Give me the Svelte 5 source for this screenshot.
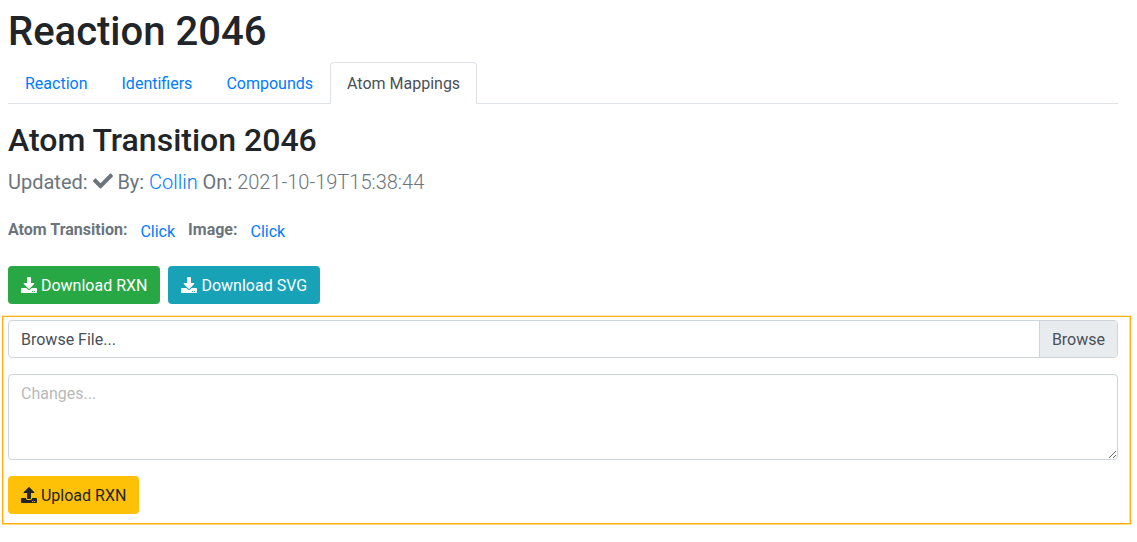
<script>
  const tabs = ['Reaction', 'Identifiers', 'Compounds', 'Atom Mappings'];
  let active = $state('Atom Mappings');
  let changes = $state('');
  const dots =
    'm-124 88c0-11-9-20-20-20s-20 9-20 20 9 20 20 20 20-9 20-20zm64 0c0-11-9-20-20-20s-20 9-20 20 9 20 20 20 20-9 20-20z';
  const icons = {
    check:
      'M173.898 439.404l-166.4-166.4c-9.997-9.997-9.997-26.206 0-36.204l36.203-36.204c9.997-9.998 26.207-9.998 36.204 0L192 312.69 432.095 72.596c9.997-9.997 26.207-9.997 36.204 0l36.203 36.204c9.997 9.997 9.997 26.206 0 36.204l-294.4 294.401c-9.998 9.997-26.207 9.997-36.204-.001z',
    download:
      'M216 0h80c13.3 0 24 10.7 24 24v168h87.7c17.8 0 26.7 21.5 14.1 34.1L269.7 378.3c-7.5 7.5-19.8 7.5-27.3 0L90.1 226.1c-12.6-12.6-3.7-34.1 14.1-34.1H192V24c0-13.3 10.7-24 24-24zm296 376v112c0 13.3-10.7 24-24 24H24c-13.3 0-24-10.7-24-24V376c0-13.3 10.7-24 24-24h146.7l49 49c20.1 20.1 52.5 20.1 72.6 0l49-49H488c13.3 0 24 10.7 24 24z' + dots,
    upload:
      'M296 384h-80c-13.3 0-24-10.7-24-24V192h-87.7c-17.8 0-26.7-21.5-14.1-34.1L242.3 5.7c7.5-7.5 19.8-7.5 27.3 0l152.2 152.2c12.6 12.6 3.7 34.1-14.1 34.1H320v168c0 13.3-10.7 24-24 24zm216-8v112c0 13.3-10.7 24-24 24H24c-13.3 0-24-10.7-24-24V376c0-13.3 10.7-24 24-24h136v8c0 30.9 25.1 56 56 56h80c30.9 0 56-25.1 56-56v-8h136c13.3 0 24 10.7 24 24z' + dots
  };
</script>

{#snippet icon(name)}
  <svg class="icon" viewBox="0 0 512 512" aria-hidden="true"><path d={icons[name]} /></svg>
{/snippet}

<main>
  <h1>Reaction 2046</h1>
  <nav>
    {#each tabs as tab}
      <button class="tab" class:active={tab === active} onclick={() => (active = tab)}>{tab}</button>
    {/each}
  </nav>

  <h2>Atom Transition 2046</h2>
  <p class="lead">
    <span class="label">Updated:</span>
    {@render icon('check')}
    <span class="label">By:</span>
    <a href="#collin">Collin</a>
    <span class="label">On:</span>
    <span>2021-10-19T15:38:44</span>
  </p>

  <div class="links">
    <strong>Atom Transition:</strong><button class="btn link">Click</button>
    <strong>Image:</strong><button class="btn link">Click</button>
  </div>

  <div class="downloads">
    <button class="btn success">{@render icon('download')} Download RXN</button>
    <button class="btn info">{@render icon('download')} Download SVG</button>
  </div>

  <form class="upload" onsubmit={(e) => e.preventDefault()}>
    <div class="file">
      <span class="name">Browse File...</span>
      <span class="browse">Browse</span>
    </div>
    <textarea placeholder="Changes..." bind:value={changes}></textarea>
    <button class="btn warning">{@render icon('upload')} Upload RXN</button>
  </form>
</main>

<style>
  :global(body) {
    margin: 0;
    background: #fff;
  }
  main {
    box-sizing: border-box;
    width: 1137px;
    padding: 8px 19px 28px 8px;
    font: 400 16px/24px Roboto, sans-serif;
    color: #212529;
  }
  main :global(*) {
    box-sizing: border-box;
  }
  h1,
  h2 {
    margin: 0;
    font-weight: 500;
    line-height: 1.2;
  }
  h1 {
    margin-bottom: 6px;
    font-size: 40px;
  }
  h2 {
    margin-bottom: 7.6px;
    font-size: 32px;
  }
  nav {
    display: flex;
    margin-bottom: 17px;
    border-bottom: 1px solid #dee2e6;
  }
  .tab {
    margin-bottom: -1px;
    padding: 9px 16px 7px;
    border: 1px solid transparent;
    border-radius: 4px 4px 0 0;
    background: none;
    font: inherit;
    color: #007bff;
    cursor: pointer;
  }
  .tab.active {
    border-color: #dee2e6 #dee2e6 #fff;
    background: #fff;
    color: #495057;
  }
  .lead {
    margin: 0 0 15px;
    padding-top: 1px;
    margin-top: -1px;
    padding-bottom: 0;
    font-size: 20px;
    font-weight: 300;
    line-height: 30px;
    color: #6c757d;
  }
  .label {
    font-weight: 400;
  }
  a {
    color: #007bff;
    text-decoration: none;
  }
  .icon {
    display: inline-block;
    width: 1em;
    height: 1em;
    overflow: visible;
    vertical-align: -0.125em;
    fill: currentColor;
  }
  .links {
    display: flex;
    margin-bottom: 16px;
    color: #6c757d;
  }
  strong {
    padding-top: 6px;
    font-weight: 700;
  }
  .btn {
    height: 38px;
    padding: 7px 12px 5px;
    border: 1px solid transparent;
    border-radius: 4px;
    font: inherit;
    white-space: nowrap;
    cursor: pointer;
  }
  .link {
    background: none;
    color: #007bff;
  }
  .downloads {
    display: flex;
    gap: 8px;
    margin-bottom: 16px;
  }
  .success {
    background: #28a745;
    color: #fff;
  }
  .info {
    background: #17a2b8;
    color: #fff;
  }
  .warning {
    background: #ffc107;
    color: #212529;
  }
  .upload {
    position: relative;
    display: flex;
    flex-direction: column;
    align-items: flex-start;
    gap: 16px;
  }
  .upload::after {
    content: '';
    position: absolute;
    inset: -4px -13px -10px -6px;
    border: 1px solid #ffb010;
    box-shadow:
      0 -1px #ffe9bd,
      0 1px #ffd98c,
      inset 1px 0 #ffe0a0,
      inset -1px 0 #ffe0a0;
    pointer-events: none;
  }
  .file {
    display: flex;
    width: 100%;
    height: 38px;
    border: 1px solid #ced4da;
    border-radius: 4px;
    color: #495057;
    overflow: hidden;
  }
  .name {
    flex: 1;
    padding: 7px 12px 5px;
  }
  .browse {
    padding: 7px 12px 5px;
    border-left: 1px solid #ced4da;
    background: #e9ecef;
  }
  textarea {
    display: block;
    width: 100%;
    height: 86px;
    padding: 7px 12px 5px;
    border: 1px solid #ced4da;
    border-radius: 4px;
    font: inherit;
    color: #495057;
    resize: vertical;
  }
  textarea::placeholder {
    color: #b9b9b9;
  }
</style>
